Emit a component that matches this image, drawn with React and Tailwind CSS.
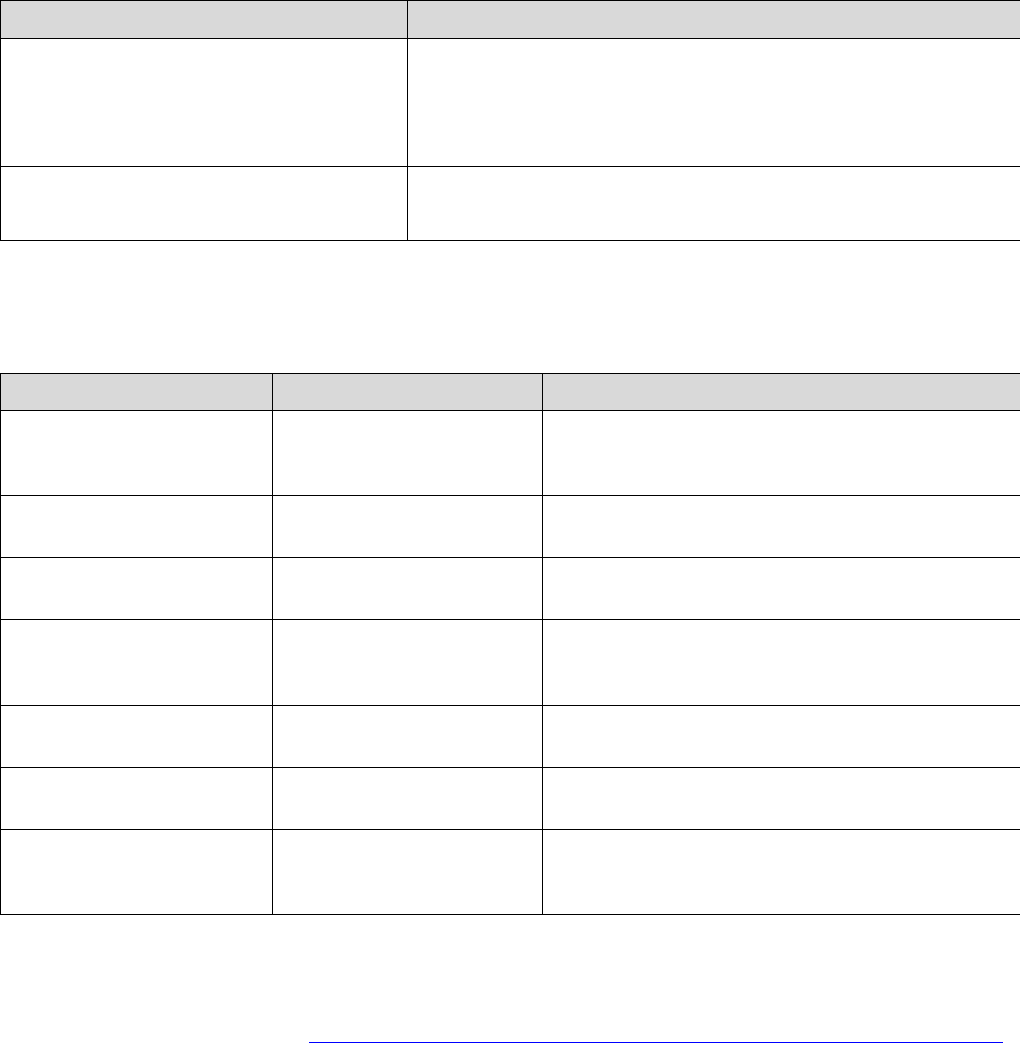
import React from "react";

// Empty document tables, header rows shaded grey
const TOP_ROWS = [128, 74];
const BOTTOM_ROWS = [85, 62, 62, 86, 62, 62, 85];

function DocTable({ cols, headerH, rows, className = "" }) {
  return (
    <table className={`w-[1020px] table-fixed border-collapse border border-black ${className}`}>
      <colgroup>
        {cols.map((w, i) => (
          <col key={i} style={{ width: w }} />
        ))}
      </colgroup>
      <thead>
        <tr style={{ height: headerH }}>
          {cols.map((_, i) => (
            <th key={i} className="border border-black bg-[#d9d9d9] p-0"></th>
          ))}
        </tr>
      </thead>
      <tbody>
        {rows.map((h, r) => (
          <tr key={r} style={{ height: h }}>
            {cols.map((_, i) => (
              <td key={i} className="border border-black p-0"></td>
            ))}
          </tr>
        ))}
      </tbody>
    </table>
  );
}

export default function App() {
  return (
    <div className="w-[1020px] min-h-[1057px] bg-white font-['Liberation_Sans',Arial,sans-serif] text-black">
      <DocTable cols={[407, 613]} headerH={38} rows={TOP_ROWS} />
      <DocTable cols={[272, 270, 478]} headerH={37} rows={BOTTOM_ROWS} className="mt-[132px]" />

      {/* link underline at the foot of the page */}
      <div className="mt-[127px] flex">
        <a href="#" className="ml-[309px] block w-[694px] h-px bg-[#0000ff]"></a>
      </div>
    </div>
  );
}
